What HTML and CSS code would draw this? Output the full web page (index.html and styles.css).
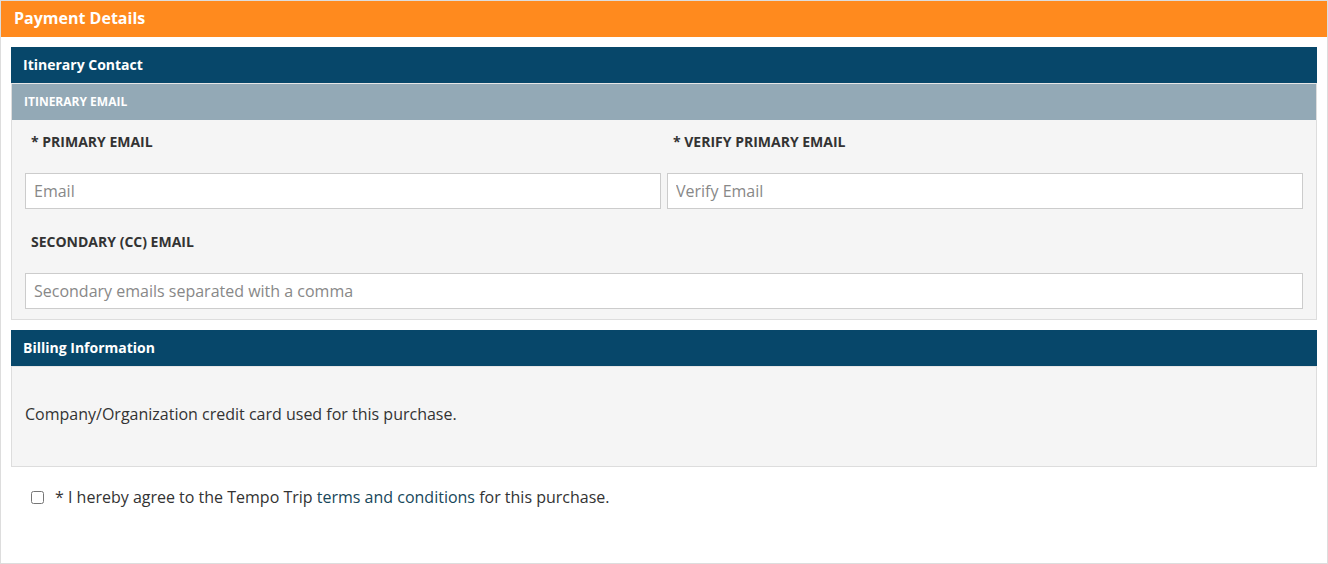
FILE: index.html
```html
<!DOCTYPE html>
<html>
<head>
<meta charset="utf-8">
<link rel="stylesheet" href="styles.css">
</head>
<body>
<div class="panel">
  <div class="panel-heading">Payment Details</div>
  <div class="panel-body">
    <div class="section">
      <div class="section-title">Itinerary Contact</div>
      <div class="section-body">
        <div class="subheading">ITINERARY EMAIL</div>
        <div class="fields">
          <div class="row">
            <div class="col">
              <label class="label label-first">* PRIMARY EMAIL</label>
              <input class="input" type="text" placeholder="Email">
            </div>
            <div class="col">
              <label class="label label-first">* VERIFY PRIMARY EMAIL</label>
              <input class="input" type="text" placeholder="Verify Email">
            </div>
          </div>
          <div class="row">
            <div class="col">
              <label class="label label-next">SECONDARY (CC) EMAIL</label>
              <input class="input" type="text" placeholder="Secondary emails separated with a comma">
            </div>
          </div>
        </div>
      </div>
    </div>
    <div class="section section-billing">
      <div class="section-title">Billing Information</div>
      <div class="section-body billing-body">
        <p class="billing-text">Company/Organization credit card used for this purchase.</p>
      </div>
    </div>
    <div class="agree">
      <input class="checkbox" type="checkbox" id="agree">
      <label for="agree" class="agree-text">* I hereby agree to the Tempo Trip <a class="link" href="#">terms and conditions</a> for this purchase.</label>
    </div>
  </div>
</div>
</body>
</html>
```

FILE: styles.css
```css
* { box-sizing: border-box; }
html, body { margin: 0; padding: 0; background: #fff; }
body { font-family: "Open Sans", "Liberation Sans", sans-serif; color: #333; width: 1328px; height: 564px; overflow: hidden; }

.panel {
  border: 1px solid #ddd;
  height: 564px;
  background: #fff;
}
.panel-heading {
  background: #ff8a1e;
  color: #fff;
  font-weight: 700;
  font-size: 16px;
  height: 36px;
  line-height: 34px;
  padding: 0 13px;
}
.panel-body {
  padding: 10px 10px 0;
}
.section-title {
  background: #07476a;
  color: #fff;
  font-weight: 700;
  font-size: 14px;
  height: 36px;
  line-height: 36px;
  padding: 0 12px;
}
.section-body {
  background: #f5f5f5;
  border: 1px solid #ddd;
  border-top-color: #e6e6e6;
}
.subheading {
  background: #93a9b6;
  color: #fff;
  font-weight: 700;
  font-size: 12px;
  height: 36px;
  line-height: 36px;
  padding: 0 12px;
}
.fields {
  padding: 0 13px 10px;
}
.row {
  display: flex;
  gap: 6px;
}
.col {
  flex: 1;
  display: flex;
  flex-direction: column;
}
.label {
  display: block;
  font-weight: 700;
  font-size: 14px;
  line-height: 18px;
  padding-left: 6px;
  color: #333;
}
.label-first { margin: 13px 0 22px; }
.label-next { margin: 24px 0 22px; }
.input {
  display: block;
  width: 100%;
  height: 36px;
  border: 1px solid #ccc;
  background: #fff;
  padding: 0 8px;
  font-family: "Open Sans", "Liberation Sans", sans-serif;
  font-size: 16px;
  color: #555;
  outline: none;
  margin: 0;
}
.input::placeholder { color: #888; }

.section-billing { margin-top: 10px; }
.billing-body {
  height: 101px;
  display: flex;
  align-items: center;
  padding: 0 13px;
}
.billing-text {
  margin: 0;
  font-size: 16px;
  color: #333;
  padding-bottom: 6px;
}

.agree {
  display: flex;
  align-items: center;
  padding: 19px 0 0 20px;
}
.checkbox {
  margin: 0;
  width: 13px;
  height: 13px;
}
.agree-text {
  margin-left: 11px;
  font-size: 16px;
  color: #333;
}
.link {
  color: #17475a;
  text-decoration: none;
}
```
